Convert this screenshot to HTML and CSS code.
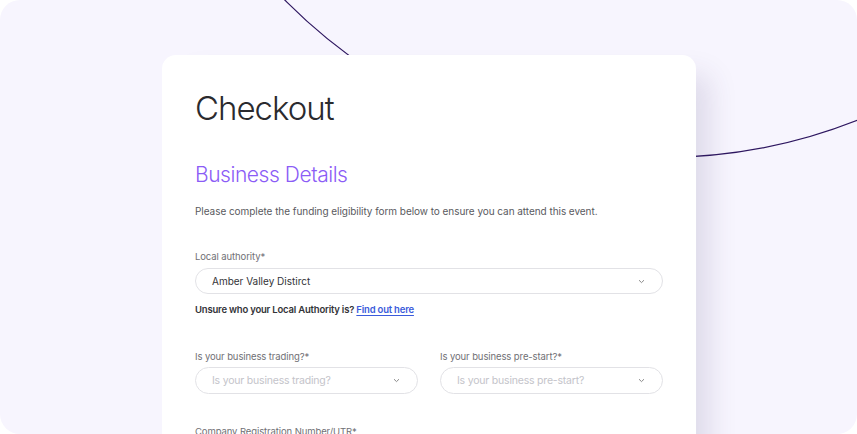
FILE: index.html
```html
<!DOCTYPE html>
<html lang="en">
<head>
<meta charset="utf-8">
<title>Checkout</title>
<link rel="stylesheet" href="styles.css">
</head>
<body>
<div class="frame">
  <svg class="curve" width="857" height="434" viewBox="0 0 857 434" aria-hidden="true">
    <circle cx="662" cy="-373" r="530.5" fill="none" stroke="#2e1760" stroke-width="1.2"/>
  </svg>
  <main class="card">
    <h1 class="title">Checkout</h1>
    <h2 class="section">Business Details</h2>
    <p class="intro">Please complete the funding eligibility form below to ensure you can attend this event.</p>

    <div class="field field-first">
      <label class="label">Local authority*</label>
      <div class="select">
        <span class="value">Amber Valley Distirct</span>
        <svg class="chev" width="7" height="5" viewBox="0 0 7 5"><path d="M1 1.2 L3.5 3.6 L6 1.2" fill="none" stroke="#8a8a8a" stroke-width="1"/></svg>
      </div>
      <p class="hint">Unsure who your Local Authority is? <a href="#" class="link">Find out here</a></p>
    </div>

    <div class="row">
      <div class="field">
        <label class="label">Is your business trading?*</label>
        <div class="select select-sm">
          <span class="placeholder">Is your business trading?</span>
          <svg class="chev" width="7" height="5" viewBox="0 0 7 5"><path d="M1 1.2 L3.5 3.6 L6 1.2" fill="none" stroke="#8a8a8a" stroke-width="1"/></svg>
        </div>
      </div>
      <div class="field">
        <label class="label">Is your business pre-start?*</label>
        <div class="select select-sm">
          <span class="placeholder">Is your business pre-start?</span>
          <svg class="chev" width="7" height="5" viewBox="0 0 7 5"><path d="M1 1.2 L3.5 3.6 L6 1.2" fill="none" stroke="#8a8a8a" stroke-width="1"/></svg>
        </div>
      </div>
    </div>

    <div class="field field-last">
      <label class="label">Company Registration Number/UTR*</label>
    </div>
  </main>
</div>
</body>
</html>
```

FILE: styles.css
```css
* { box-sizing: border-box; }
html, body { margin: 0; padding: 0; background: #ffffff; }
body { font-family: Inter, "Liberation Sans", sans-serif; }

.frame {
  position: relative;
  width: 857px;
  height: 434px;
  overflow: hidden;
  border-radius: 20px;
  background: #f7f5fe;
  padding: 55px 0 0 162px;
}

.curve {
  position: absolute;
  left: 0;
  top: 0;
}

.card {
  position: relative;
  z-index: 1;
  width: 534px;
  min-height: 420px;
  background: #ffffff;
  border-radius: 14px;
  padding: 33px 33px 0 33px;
  box-shadow: 20px 14px 28px -6px rgba(60, 50, 100, 0.13);
}

.title {
  margin: 0;
  font-size: 33px;
  line-height: 40px;
  font-weight: 300;
  color: #2a2a2e;
  letter-spacing: -1px;
}

.section {
  margin: 34px 0 0 0;
  font-size: 21px;
  line-height: 26px;
  font-weight: 300;
  color: #8b5cf6;
  letter-spacing: -0.45px;
}

.intro {
  margin: 16px 0 0 0;
  font-size: 10px;
  line-height: 14px;
  color: #5a5a60;
  letter-spacing: -0.05px;
}

.field-first { margin-top: 33px; }

.label {
  display: block;
  font-size: 9.5px;
  line-height: 12px;
  color: #707075;
  letter-spacing: -0.1px;
}

.select {
  margin-top: 5px;
  height: 26px;
  border: 1px solid #e2e2e6;
  border-radius: 13px;
  display: flex;
  align-items: center;
  justify-content: space-between;
  padding: 0 17px 0 16px;
}

.select-sm { height: 27px; border-radius: 14px; }

.value {
  font-size: 10px;
  color: #333338;
}

.placeholder {
  font-size: 10.5px;
  color: #c4c4ca;
  letter-spacing: -0.2px;
}

.chev { display: block; }

.hint {
  margin: 10px 0 0 0;
  font-size: 9.5px;
  line-height: 12px;
  font-weight: 600;
  color: #333338;
  letter-spacing: -0.2px;
}

.link {
  color: #3b5bdb;
  text-decoration: underline;
  text-underline-offset: 2px;
}

.row {
  margin-top: 35px;
  display: grid;
  grid-template-columns: 1fr 1fr;
  gap: 22px;
}

.row .select { margin-top: 4px; }

.field-last { margin-top: 32px; }
```
